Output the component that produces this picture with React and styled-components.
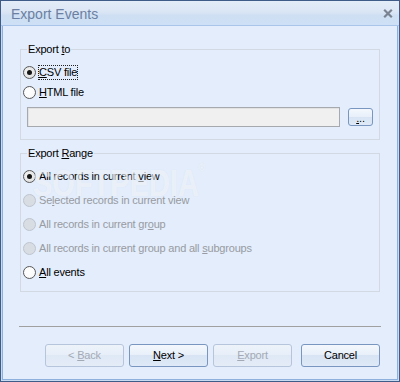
import React from "react";
import styled, { createGlobalStyle } from "styled-components";

const GlobalStyle = createGlobalStyle`
  html, body { margin: 0; padding: 0; background: #ffffff; }
  body { font-family: "Liberation Sans", Arial, sans-serif; }
`;

const Window = styled.div`
  width: 400px;
  height: 382px;
  box-sizing: border-box;
  border: 1px solid #3e5c87;
  background: #c9dbf1;
  display: flex;
  flex-direction: column;
  font-family: "Liberation Sans", Arial, sans-serif;
  font-size: 11px;
  letter-spacing: -0.2px;
  color: #000;
`;

const TitleBar = styled.div`
  height: 25px;
  box-sizing: border-box;
  border-bottom: 1px solid #a9c5ea;
  background: linear-gradient(#e3ecf8 0%, #dbe6f5 45%, #cedff3 60%, #cde0f5 100%);
  display: flex;
  align-items: center;
  justify-content: space-between;
  padding: 2px 6px 0 10px;
`;

const Title = styled.span`
  font-size: 14px;
  letter-spacing: 0;
  color: #6b7fa2;
`;

const CloseIcon = styled.svg`
  width: 10px;
  height: 9px;
  margin-top: -1px;
`;

const Frame = styled.div`
  flex: 1;
  margin: 0 1px 1px;
  border: 1px solid #8eb0dc;
  border-top: none;
  background: #e3edfb;
  padding: 23px 17px 12px;
  display: flex;
  flex-direction: column;
  position: relative;
`;

const Group = styled.div`
  position: relative;
  border: 1px solid #d2d9e3;
  padding: ${(p) => p.$pad};
  margin-top: ${(p) => p.$top || 0}px;
  display: flex;
  flex-direction: column;
`;

const Legend = styled.span`
  position: absolute;
  top: -7px;
  left: 6px;
  padding: 0 1px;
  background: #e3edfb;
  line-height: 13px;
`;

const RadioRow = styled.div`
  height: ${(p) => p.$h}px;
  display: flex;
  align-items: center;
  padding-left: 2px;
  gap: 2px;
  color: ${(p) => (p.$disabled ? "#989ba2" : "#000")};
`;

const RadioDot = styled.span`
  width: 13px;
  height: 13px;
  box-sizing: border-box;
  border-radius: 50%;
  border: 1px solid ${(p) => (p.$disabled ? "#bfc5ce" : "#585858")};
  background: ${(p) =>
    p.$disabled
      ? "#d8dde4"
      : p.$checked
      ? "radial-gradient(circle at 40% 40%, #f4f4f4, #e2e2e2 70%, #d4d4d4)"
      : "radial-gradient(circle at 40% 40%, #ffffff, #fbfbfb 60%, #ececec)"};
  display: flex;
  align-items: center;
  justify-content: center;
  &::after {
    content: "";
    display: ${(p) => (p.$checked ? "block" : "none")};
    width: 5px;
    height: 5px;
    border-radius: 50%;
    background: #151515;
  }
`;

const Label = styled.span`
  border: 1px ${(p) => (p.$focused ? "dotted #202020" : "solid transparent")};
  line-height: 13px;
`;

const Key = styled.span`
  text-decoration: underline;
  text-underline-offset: 1px;
`;

const FileRow = styled.div`
  display: flex;
  align-items: center;
  height: 20px;
  margin: 5px 0 0 6px;
  gap: 8px;
`;

const TextBox = styled.div`
  width: 313px;
  height: 20px;
  box-sizing: border-box;
  background: #f0f0f0;
  border: 1px solid #a6a9ae;
  box-shadow: inset 1px 1px 0 #e2e2e2;
`;

const Separator = styled.div`
  height: 1px;
  background: #a0a0a0;
  margin: 34px -1px 0;
`;

const ButtonRow = styled.div`
  display: flex;
  justify-content: flex-end;
  gap: 5px;
  margin-top: 17px;
`;

const Button = styled.button`
  width: ${(p) => p.$w || 79}px;
  height: ${(p) => p.$h || 23}px;
  margin-left: ${(p) => p.$ml || 0}px;
  box-sizing: border-box;
  padding: 0;
  border: 1px solid ${(p) => (p.disabled ? "#b6c5db" : "#7896c0")};
  border-radius: 3px;
  background: ${(p) =>
    p.disabled
      ? "linear-gradient(#eef3fa 0%, #e7eef8 50%, #dfe8f5 50%, #e4ecf8 100%)"
      : "linear-gradient(#f4f8fd 0%, #e8eff9 50%, #d8e4f4 50%, #dfe9f7 100%)"};
  font-family: "Liberation Sans", Arial, sans-serif;
  font-size: 11px;
  letter-spacing: -0.2px;
  color: ${(p) => (p.disabled ? "#a3aab5" : "#000")};
  display: flex;
  align-items: ${(p) => p.$align || "center"};
  justify-content: center;
  line-height: 13px;
  cursor: default;
`;

const Watermark = styled.div`
  position: absolute;
  left: 30px;
  top: 136px;
  font-size: 29px;
  font-weight: bold;
  letter-spacing: 0;
  color: rgba(255, 255, 255, 0.45);
  text-shadow: 0 0 1px rgba(200, 212, 230, 0.35);
  transform: scaleY(1.3);
  transform-origin: top left;
  pointer-events: none;
`;

const Reg = styled.span`
  font-size: 8px;
  vertical-align: top;
`;

function Radio({ h, checked, disabled, focused, children }) {
  return (
    <RadioRow $h={h} $disabled={disabled}>
      <RadioDot $checked={checked} $disabled={disabled} />
      <Label $focused={focused}>{children}</Label>
    </RadioRow>
  );
}

export default function App() {
  return (
    <>
      <GlobalStyle />
      <Window>
        <TitleBar>
          <Title>Export Events</Title>
          <CloseIcon viewBox="0 0 10 9">
            <path d="M1.2 0.8 L8.8 8.2 M8.8 0.8 L1.2 8.2" stroke="#7a8392" strokeWidth="2.2" fill="none" />
          </CloseIcon>
        </TitleBar>
        <Frame>
          <Group $pad="12px 0 12px">
            <Legend>
              Export <Key>t</Key>o
            </Legend>
            <Radio h={20} checked focused>
              <Key>C</Key>SV file
            </Radio>
            <Radio h={20}>
              <Key>H</Key>TML file
            </Radio>
            <FileRow>
              <TextBox />
              <Button $w={25} $h={18} $align="flex-end">
                <span>
                  <Key>.</Key>..
                </span>
              </Button>
            </FileRow>
          </Group>
          <Group $pad="10px 0 7px" $top={13}>
            <Legend>
              Export <Key>R</Key>ange
            </Legend>
            <Radio h={24} checked>
              All records in current <Key>v</Key>iew
            </Radio>
            <Radio h={24} disabled>
              Se<Key>l</Key>ected records in current view
            </Radio>
            <Radio h={24} disabled>
              All records in current gr<Key>o</Key>up
            </Radio>
            <Radio h={24} disabled>
              All records in current group and all <Key>s</Key>ubgroups
            </Radio>
            <Radio h={24}>
              <Key>A</Key>ll events
            </Radio>
          </Group>
          <Separator />
          <ButtonRow>
            <Button disabled>
              <span>
                &lt; <Key>B</Key>ack
              </span>
            </Button>
            <Button>
              <span>
                <Key>N</Key>ext &gt;
              </span>
            </Button>
            <Button disabled>
              <span>
                <Key>E</Key>xport
              </span>
            </Button>
            <Button $ml={4}>Cancel</Button>
          </ButtonRow>
          <Watermark>
            SOFTPEDIA<Reg>®</Reg>
          </Watermark>
        </Frame>
      </Window>
    </>
  );
}
